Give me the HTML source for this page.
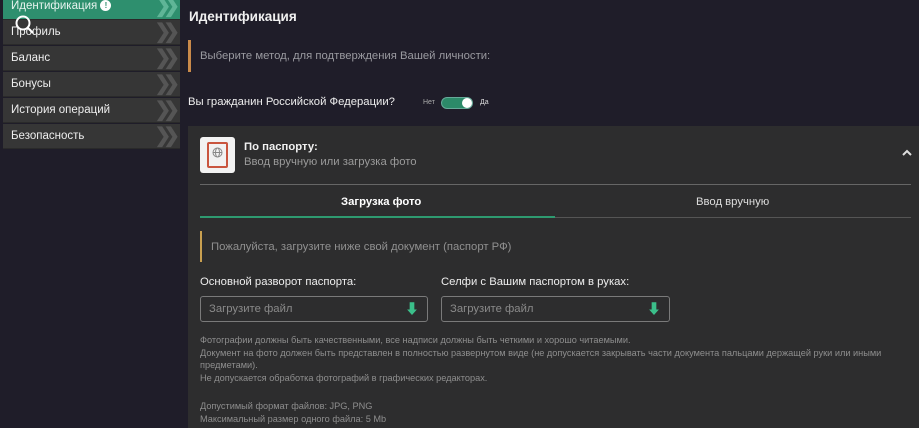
<!DOCTYPE html>
<html><head><meta charset="utf-8"><style>
*{margin:0;padding:0;box-sizing:border-box}
body{width:919px;height:428px;overflow:hidden;background:#1f1d29;font-family:"Liberation Sans","Noto Sans CJK SC",sans-serif;color:#e8e8e8;position:relative;font-size:11.3px}
.abs{position:absolute}
.side div{position:absolute;left:3px;width:177px;height:25px;background:#363636;border-bottom:1px solid #2a2a2a;font-size:11.5px;line-height:25px;padding-left:8px;color:#eee}
.side div.act{background:#2e8f6e;color:#e6f3ee}
.chev{position:absolute;right:8px;top:0;color:#555;font-weight:bold;font-size:20px;letter-spacing:-8px}
.act .chev{color:#5fb597}
.inp{position:absolute;height:26px;border:1px solid #7a7a7a;border-radius:3px;color:#8a8a8a;font-size:11.3px;line-height:24px;padding-left:8px}
.small{font-size:9.2px;color:#8e8e8e;line-height:12.5px}
</style></head><body>
<div class="side">
 <div class="act" style="top:-6px;height:26px;line-height:24px">Идентификация <span style="display:inline-block;width:11px;height:11px;border-radius:50%;background:#fff;color:#2e8f6e;font-size:8px;line-height:11px;text-align:center;font-weight:bold;vertical-align:1px">!</span><span class="chev">❯❯</span></div>
 <div style="top:20px">Профиль<span class="chev">❯❯</span></div>
 <div style="top:46px">Баланс<span class="chev">❯❯</span></div>
 <div style="top:72px">Бонусы<span class="chev">❯❯</span></div>
 <div style="top:98px">История операций<span class="chev">❯❯</span></div>
 <div style="top:124px">Безопасность<span class="chev">❯❯</span></div>
</div>
<svg class="abs" style="left:14px;top:14px" width="22" height="22"><circle cx="9" cy="9" r="6.5" fill="none" stroke="#fff" stroke-width="2"/><line x1="14" y1="14" x2="19" y2="19" stroke="#fff" stroke-width="2"/></svg>
<div class="abs" style="left:189px;top:9px;font-size:13.5px;font-weight:bold;color:#f0f0f0">Идентификация</div>
<div class="abs" style="left:188px;top:40px;width:3px;height:32px;background:#c98a4a"></div>
<div class="abs" style="left:200px;top:50px;color:#9a9aa0">Выберите метод, для подтверждения Вашей личности:</div>
<div class="abs" style="left:188px;top:96px;color:#eee">Вы гражданин Российской Федерации?</div>
<div class="abs" style="left:423px;top:99px;font-size:7px;color:#aaa">Нет</div>
<div class="abs" style="left:441px;top:97px;width:32px;height:12px;border-radius:6px;background:#2c8a69;border:1px solid #6a9"></div>
<div class="abs" style="left:462px;top:98px;width:10px;height:10px;border-radius:50%;background:#fff"></div>
<div class="abs" style="left:480px;top:99px;font-size:7px;color:#ddd">Да</div>
<div class="abs" style="left:188px;top:126px;width:731px;height:302px;background:#2d2d2e"></div>
<div class="abs" style="left:200px;top:137px;width:35px;height:36px;background:#f2f2f2;border-radius:3px"></div>
<div class="abs" style="left:207px;top:142px;width:21px;height:26px;border:2px solid #c9553f;border-radius:2px"></div>
<svg class="abs" style="left:211px;top:146px" width="13" height="13"><circle cx="6.5" cy="6.5" r="4.5" fill="none" stroke="#888" stroke-width="1"/><line x1="2" y1="6.5" x2="11" y2="6.5" stroke="#888"/><ellipse cx="6.5" cy="6.5" rx="2" ry="4.5" fill="none" stroke="#888"/></svg>
<div class="abs" style="left:244px;top:141px;font-weight:bold;color:#f0f0f0">По паспорту:</div>
<div class="abs" style="left:244px;top:156px;color:#9a9a9a">Ввод вручную или загрузка фото</div>
<svg class="abs" style="left:901px;top:149px" width="12" height="8"><path d="M2 6 L6 2 L10 6" fill="none" stroke="#ddd" stroke-width="2"/></svg>
<div class="abs" style="left:200px;top:184px;width:711px;height:1px;background:#666"></div>
<div class="abs" style="left:341px;top:196px;font-weight:bold;color:#fff">Загрузка фото</div>
<div class="abs" style="left:696px;top:196px;color:#ddd">Ввод вручную</div>
<div class="abs" style="left:200px;top:217px;width:711px;height:1px;background:#555"></div>
<div class="abs" style="left:200px;top:216px;width:355px;height:2px;background:#2e9a70"></div>
<div class="abs" style="left:200px;top:231px;width:2px;height:31px;background:#c9a050"></div>
<div class="abs" style="left:211px;top:241px;color:#909090">Пожалуйста, загрузите ниже свой документ (паспорт РФ)</div>
<div class="abs" style="left:200px;top:276px;color:#eee">Основной разворот паспорта:</div>
<div class="abs" style="left:441px;top:276px;color:#eee">Селфи с Вашим паспортом в руках:</div>
<div class="inp" style="left:200px;top:296px;width:228px">Загрузите файл<span style="position:absolute;right:8px;top:0;color:#3bbf8a;font-size:14px">⬇</span></div>
<div class="inp" style="left:441px;top:296px;width:229px">Загрузите файл<span style="position:absolute;right:8px;top:0;color:#3bbf8a;font-size:14px">⬇</span></div>
<div class="abs small" style="left:200px;top:334px;width:712px">Фотографии должны быть качественными, все надписи должны быть четкими и хорошо читаемыми.<br>Документ на фото должен быть представлен в полностью развернутом виде (не допускается закрывать части документа пальцами держащей руки или иными предметами).<br>Не допускается обработка фотографий в графических редакторах.</div>
<div class="abs small" style="left:200px;top:400px">Допустимый формат файлов: JPG, PNG<br>Максимальный размер одного файла: 5 Mb</div>
</body></html>
